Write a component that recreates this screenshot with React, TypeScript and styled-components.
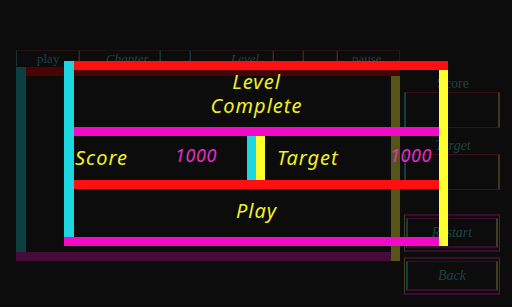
import React from 'react';
import styled, { createGlobalStyle } from 'styled-components';

const GlobalStyle = createGlobalStyle`
  html, body {
    margin: 0;
    padding: 0;
    background: #0c0c0c;
  }
  body {
    width: 512px;
    height: 307px;
    overflow: hidden;
    font-family: "Liberation Serif", serif;
  }
`;

const Screen = styled.div`
  position: relative;
  width: 512px;
  height: 307px;
  background: #0c0c0c;
  display: flex;
  padding: 50px 0 0 16px;
  box-sizing: border-box;
  gap: 4px;
`;

const LeftColumn = styled.div`
  width: 384px;
  display: flex;
  flex-direction: column;
  gap: 1px;
`;

const TopBar = styled.div`
  display: flex;
  height: 16px;
`;

const TopCell = styled.div<{ $w: number; $pad?: number; $italic?: boolean }>`
  width: ${p => p.$w}px;
  box-sizing: border-box;
  border-top: 1px solid #241012;
  border-left: 1px solid #143636;
  border-right: 1px solid #2a1812;
  padding-left: ${p => p.$pad ?? 0}px;
  font-size: 13px;
  line-height: 15px;
  font-style: ${p => (p.$italic ? 'italic' : 'normal')};
  color: #1d4343;
  white-space: nowrap;
`;

const Frame = styled.div`
  display: grid;
  grid-template-columns: 10px 1fr 9px;
  grid-template-rows: 9px 1fr 9px;
`;

const BarLeft = styled.div<{ $c: string }>`
  grid-column: 1;
  grid-row: 1 / 3;
  background: ${p => p.$c};
`;
const BarTop = styled.div<{ $c: string }>`
  grid-column: 2 / 4;
  grid-row: 1;
  background: ${p => p.$c};
`;
const BarRight = styled.div<{ $c: string }>`
  grid-column: 3;
  grid-row: 2 / 4;
  background: ${p => p.$c};
`;
const BarBottom = styled.div<{ $c: string }>`
  grid-column: 1 / 3;
  grid-row: 3;
  background: ${p => p.$c};
`;
const FrameBody = styled.div`
  grid-column: 2;
  grid-row: 2;
  display: flex;
  flex-direction: column;
  min-width: 0;
`;

const GameFrame = styled(Frame)`
  height: 194px;
`;

const SidePanel = styled.div`
  width: 96px;
  display: flex;
  flex-direction: column;
  padding-top: 26px;
`;

const SideLabel = styled.div<{ $italic?: boolean }>`
  height: 16px;
  text-align: center;
  font-size: 14px;
  line-height: 16px;
  color: #1d4343;
  font-style: ${p => (p.$italic ? 'italic' : 'normal')};
  padding-left: 2px;
`;

const SideBox = styled.div`
  height: 36px;
  box-sizing: border-box;
  border-top: 1px solid #3a1016;
  border-left: 2px solid #163c3c;
  border-right: 2px solid #3c3a12;
  border-bottom: 1px solid #34102c;
  margin-bottom: 10px;
`;

const SideButton = styled.div<{ $mt: number }>`
  margin-top: ${p => p.$mt}px;
  height: 38px;
  box-sizing: border-box;
  border-top: 2px solid #3a0c2c;
  border-bottom: 2px solid #3a0c2c;
  border-left: 1px solid #40401a;
  border-right: 1px solid #163c3c;
  padding: 2px 1px;
  display: flex;
`;

const SideButtonInner = styled.div`
  flex: 1;
  box-sizing: border-box;
  border-top: 1px solid #3a0c2c;
  border-bottom: 2px solid #3a0c2c;
  border-left: 2px solid #163c3c;
  border-right: 2px solid #40401a;
  display: flex;
  align-items: center;
  justify-content: center;
  font-style: italic;
  font-size: 14px;
  color: #1b4444;
`;

const Dialog = styled(Frame)`
  position: absolute;
  left: 64px;
  top: 61px;
  width: 384px;
  height: 185px;
`;

const Title = styled.div`
  height: 57px;
  display: flex;
  flex-direction: column;
  align-items: center;
`;

const Text = styled.span`
  font-family: "Noto Sans", sans-serif;
  font-style: italic;
  font-size: 20px;
  line-height: 24px;
  letter-spacing: 1px;
  color: #f0f022;
  white-space: nowrap;
`;

const HBar = styled.div<{ $c: string }>`
  height: 9px;
  background: ${p => p.$c};
`;

const ScoreRow = styled.div`
  height: 44px;
  display: grid;
  grid-template-columns: 173px 9px 9px 1fr;
`;

const Half = styled.div<{ $pad: number; $col: number }>`
  display: grid;
  grid-template-columns: ${p => p.$col}px auto;
  align-items: center;
  padding-left: ${p => p.$pad}px;
`;

const Divider = styled.div<{ $c: string }>`
  background: ${p => p.$c};
`;

const Value = styled.span`
  font-family: "Noto Sans", sans-serif;
  font-style: italic;
  font-size: 18px;
  letter-spacing: 0.6px;
  color: #e42fc8;
  margin-top: -6px;
  white-space: nowrap;
`;

const PlayArea = styled.div`
  flex: 1;
  padding-top: 10px;
  display: flex;
  justify-content: center;
  align-items: flex-start;
`;

export default function App() {
  return (
    <>
      <GlobalStyle />
      <Screen>
        <LeftColumn>
          <TopBar>
            <TopCell $w={63} $pad={20}>play</TopCell>
            <TopCell $w={81} $pad={26} $italic>Chapter</TopCell>
            <TopCell $w={30} />
            <TopCell $w={83} $pad={40} $italic>Level</TopCell>
            <TopCell $w={30} />
            <TopCell $w={34} />
            <TopCell $w={63} $pad={14}>pause</TopCell>
          </TopBar>
          <GameFrame>
            <BarLeft $c="#0c3f40" />
            <BarTop $c="#4a0404" />
            <BarRight $c="#57541a" />
            <BarBottom $c="#450c3a" />
            <FrameBody />
          </GameFrame>
        </LeftColumn>
        <SidePanel>
          <SideLabel>Score</SideLabel>
          <SideBox />
          <SideLabel $italic>Target</SideLabel>
          <SideBox />
          <SideButton $mt={14}>
            <SideButtonInner>Restart</SideButtonInner>
          </SideButton>
          <SideButton $mt={5}>
            <SideButtonInner>Back</SideButtonInner>
          </SideButton>
        </SidePanel>

        <Dialog>
          <BarLeft $c="#1ed6e0" />
          <BarTop $c="#ff1010" />
          <BarRight $c="#ffff30" />
          <BarBottom $c="#f20ac8" />
          <FrameBody>
            <Title>
              <Text>Level</Text>
              <Text>Complete</Text>
            </Title>
            <HBar $c="#f20ac8" />
            <ScoreRow>
              <Half $pad={1} $col={100}>
                <Text>Score</Text>
                <Value>1000</Value>
              </Half>
              <Divider $c="#1ed6e0" />
              <Divider $c="#ffff30" />
              <Half $pad={12} $col={113}>
                <Text>Target</Text>
                <Value>1000</Value>
              </Half>
            </ScoreRow>
            <HBar $c="#ff1010" />
            <PlayArea>
              <Text>Play</Text>
            </PlayArea>
          </FrameBody>
        </Dialog>
      </Screen>
    </>
  );
}
